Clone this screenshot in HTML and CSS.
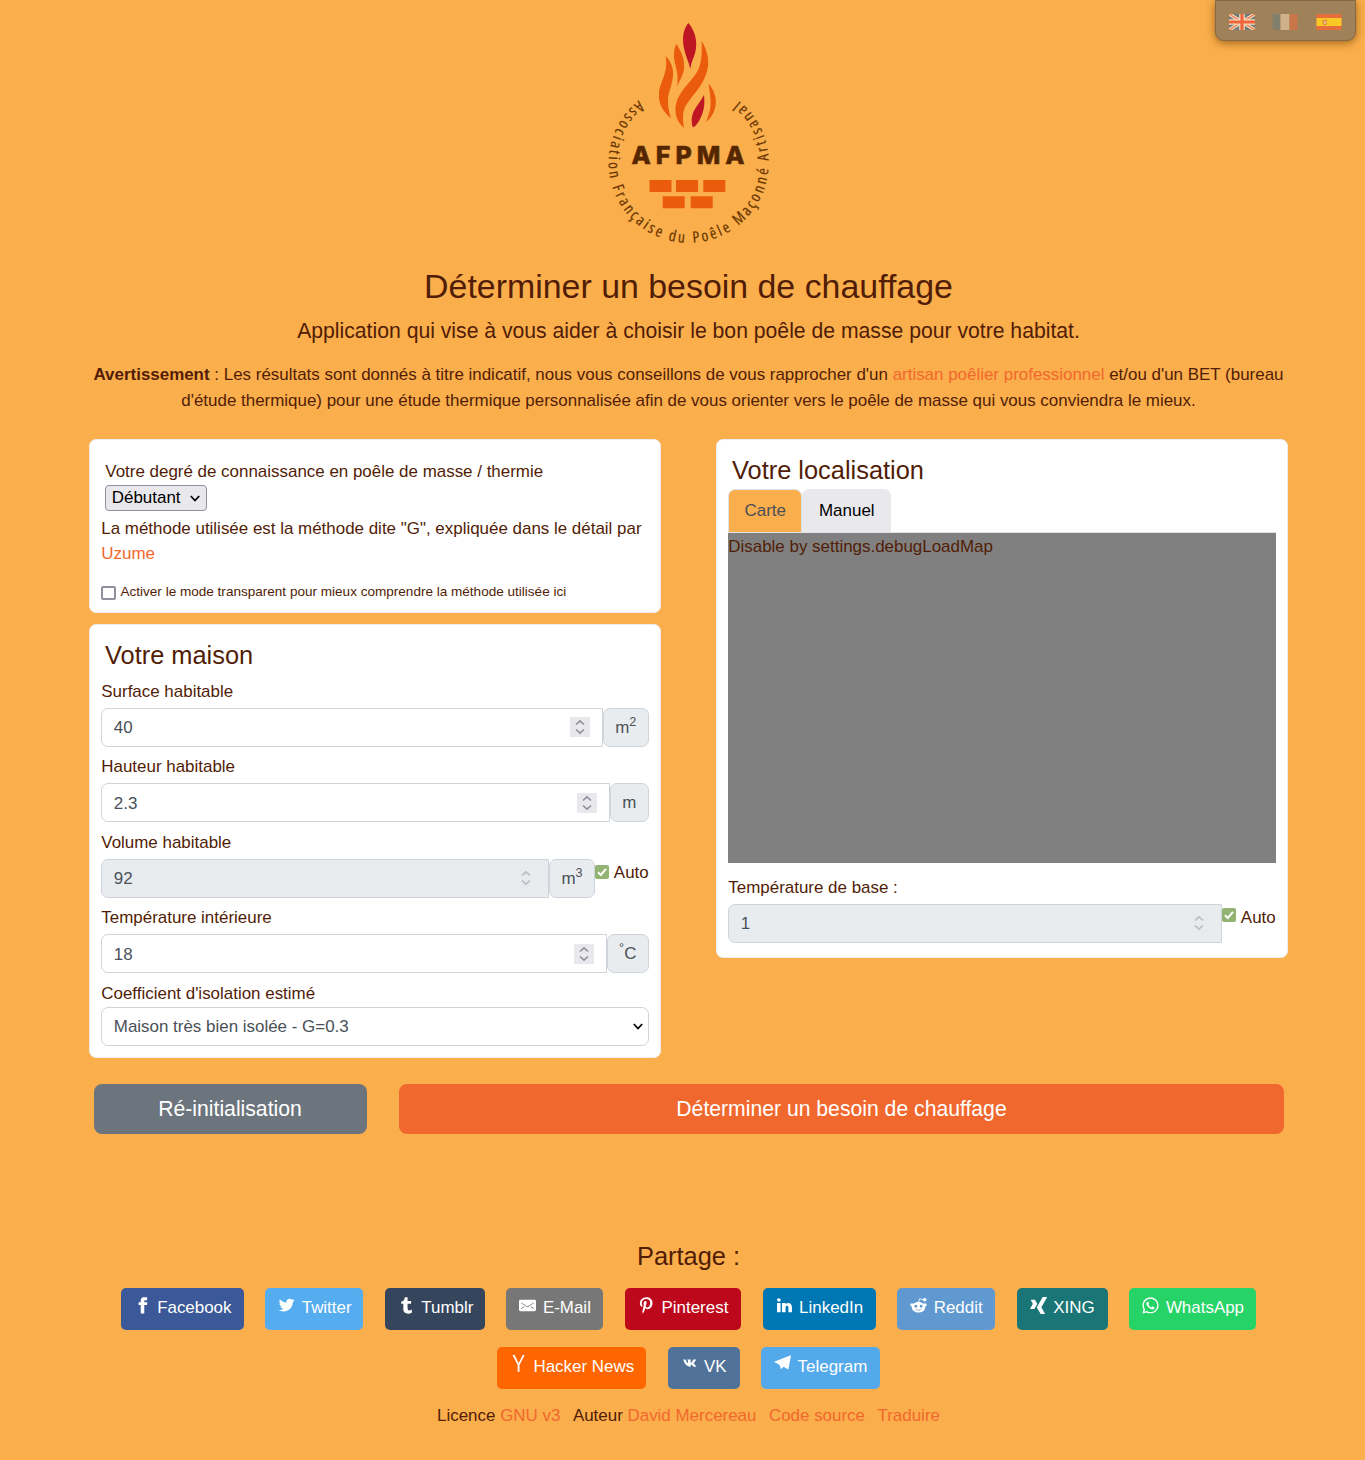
FILE: index.html
```html
<!DOCTYPE html>
<html lang="fr">
<head>
<meta charset="utf-8">
<title>Déterminer un besoin de chauffage</title>
<link rel="stylesheet" href="styles.css">
</head>
<body>
<nav class="langs">
  <svg class="flag" viewBox="0 0 26 16"><path fill="#6d7a7c" d="M0 0h26v16H0z"/><path stroke="#f5dcbc" stroke-width="3.6" d="M0 0l26 16M26 0L0 16"/><path stroke="#ee7a50" stroke-width="1.3" d="M0 0l26 16M26 0L0 16"/><path stroke="#f5dcbc" stroke-width="5.6" d="M13 0v16M0 8h26"/><path stroke="#f0643c" stroke-width="3.2" d="M13 0v16M0 8h26"/></svg>
  <svg class="flag" viewBox="0 0 26 16"><path fill="#82806c" d="M.5 0h8v16h-8z"/><path fill="#d0b28a" d="M8.500 0h9v16h-9z"/><path fill="#c87548" d="M17.500 0h8v16h-8z"/></svg>
  <svg class="flag" viewBox="0 0 26 16"><path fill="#e66e3c" d="M.5 0h25v16H.5z"/><path fill="#fbc926" d="M.5 4h25v8H.5z"/><path fill="#e0953a" d="M6 6h2l1-1 2 1v5H7z"/><path fill="#efb985" d="M8 7h2v3H8z"/></svg>
</nav>
<main class="page">
  <header class="intro">
    <svg class="logo" viewBox="590 10 200 245">
      <defs><path id="ring" d="M638.500 100.500A80 80 0 1 0 738.800 100.500L733 96"/></defs>
      <path fill="#be1622" d="M688.500 23C695 31 697 40 696 48C695 57 691 61 690.500 69C688 60 683 50 683 40C683 33 685 27 688.500 23ZM704 95C705 104 704 110 701 117C699 122 696 126 693 127.500C691 122 691 116 695 109C698 104 702 99 704 95Z"/>
      <path fill="#ea5b0c" d="M676.500 44C681 51 685 59 684 69C683 76 679 81 677 87C679 76 676 68 674.500 61C673.500 54 674 48 676.500 44ZM665.500 56C671 61 673.500 68 673 76C672 86 668 93 668 100C668 107 669 113 671 118C664 113 658 104 659 93C660 81 669 72 665.500 56ZM701.500 41C708 51 710 63 706.500 73C702 88 691 96 685 107C682 114 683 121 684 128C677 122 674 113 676 104C679 90 694 80 699 68C702 60 702 50 701.500 41ZM708.500 83.500C714 90 717 98 715.500 106C714 114 710 119 706 122C710 112 711 107 710.500 99C710 92 709 88 708.500 83.500Z"/>
      <text class="logo-name" x="631.500" y="164" textLength="113">AFPMA</text>
      <path fill="#ea5b0c" d="M649.500 180h22v12h-22zM676 180h22v12h-22zM703.300 180h22v12h-22zM662.700 196.200h22v12h-22zM690.700 196.200h22v12h-22z"/>
      <text class="logo-ring"><textPath href="#ring" textLength="393">Association Française du Poêle Maçonné Artisanal</textPath></text>
    </svg>
    <h1>Déterminer un besoin de chauffage</h1>
    <p class="lead">Application qui vise à vous aider à choisir le bon poêle de masse pour votre habitat.</p>
    <p class="warning"><b>Avertissement</b> : Les résultats sont donnés à titre indicatif, nous vous conseillons de vous rapprocher d'un <a>artisan poêlier professionnel</a> et/ou d'un BET (bureau<br>d'étude thermique) pour une étude thermique personnalisée afin de vous orienter vers le poêle de masse qui vous conviendra le mieux.</p>
  </header>
  <form>
    <div class="columns">
      <div class="column">
        <section class="card level">
          <p class="level-label">Votre degré de connaissance en poêle de masse / thermie</p>
          <button type="button" class="level-select">Débutant<svg viewBox="0 0 10 7"><path d="M.8 1L5 5.500L9.200 1"/></svg></button>
          <p>La méthode utilisée est la méthode dite "G", expliquée dans le détail par<br><a>Uzume</a></p>
          <label class="transparent"><span class="box"></span>Activer le mode transparent pour mieux comprendre la méthode utilisée ici</label>
        </section>
        <section class="card house">
          <h2>Votre maison</h2>
          <div class="field"><label>Surface habitable</label><div class="group"><div class="control">40<svg class="spin" viewBox="0 0 20 20"><path d="M6 7.500L10 3.800L14 7.500M6 12.500L10 16.200L14 12.500"/></svg></div><span class="unit">m<sup>2</sup></span></div></div>
          <div class="field"><label>Hauteur habitable</label><div class="group"><div class="control">2.3<svg class="spin" viewBox="0 0 20 20"><path d="M6 7.500L10 3.800L14 7.500M6 12.500L10 16.200L14 12.500"/></svg></div><span class="unit">m</span></div></div>
          <div class="field"><label>Volume habitable</label><div class="group"><div class="control off">92<svg class="spin" viewBox="0 0 20 20"><path d="M6 7.500L10 3.800L14 7.500M6 12.500L10 16.200L14 12.500"/></svg></div><span class="unit">m<sup>3</sup></span><span class="auto"><svg class="check" viewBox="0 0 14 14"><path d="M3 7.300L5.800 10L11 3.800"/></svg>Auto</span></div></div>
          <div class="field"><label>Température intérieure</label><div class="group"><div class="control">18<svg class="spin" viewBox="0 0 20 20"><path d="M6 7.500L10 3.800L14 7.500M6 12.500L10 16.200L14 12.500"/></svg></div><span class="unit"><sup>°</sup>C</span></div></div>
          <div class="field last"><label>Coefficient d'isolation estimé</label><div class="control select">Maison très bien isolée - G=0.3<svg viewBox="0 0 10 7"><path d="M.8 1L5 5.500L9.200 1"/></svg></div></div>
        </section>
      </div>
      <div class="column">
        <section class="card place">
          <h2>Votre localisation</h2>
          <div class="tabs"><button type="button" class="tab active">Carte</button><button type="button" class="tab">Manuel</button></div>
          <div class="map">Disable by settings.debugLoadMap</div>
          <div class="field base"><label>Température de base :</label><div class="group"><div class="control off">1<svg class="spin" viewBox="0 0 20 20"><path d="M6 7.500L10 3.800L14 7.500M6 12.500L10 16.200L14 12.500"/></svg></div><span class="auto"><svg class="check" viewBox="0 0 14 14"><path d="M3 7.300L5.800 10L11 3.800"/></svg>Auto</span></div></div>
        </section>
      </div>
    </div>
    <div class="actions"><button type="button" class="reset">Ré-initialisation</button><button type="button" class="submit">Déterminer un besoin de chauffage</button></div>
  </form>
  <footer>
    <h2 class="share-title">Partage :</h2>
    <div class="shares">
      <a class="share facebook"><svg viewBox="0 0 24 24"><path d="M18.770 7.460H14.500v-1.900c0-.9.6-1.100 1-1.100h3V.5h-4.330C10.240.5 9.500 3.440 9.500 5.320v2.150h-3v4h3v12h5v-12h3.850l.42-4z"/></svg><span>Facebook</span></a>
      <a class="share twitter"><svg viewBox="0 0 24 24"><path d="M23.440 4.830c-.8.37-1.500.38-2.220.02.93-.56.98-.96 1.320-2.020-.88.52-1.860.9-2.900 1.100-.82-.88-2-1.430-3.300-1.430-2.500 0-4.550 2.040-4.550 4.540 0 .36.03.7.1 1.040-3.770-.2-7.120-2-9.360-4.750-.4.67-.6 1.450-.6 2.300 0 1.560.8 2.950 2 3.770-.74-.03-1.440-.23-2.050-.57v.06c0 2.200 1.560 4.030 3.640 4.440-.67.2-1.370.2-2.060.08.58 1.800 2.260 3.120 4.250 3.160C5.780 18.100 3.370 18.740 1 18.460c2 1.300 4.400 2.040 6.970 2.040 8.350 0 12.920-6.920 12.920-12.930 0-.2 0-.4-.02-.6.9-.63 1.960-1.220 2.560-2.140z"/></svg><span>Twitter</span></a>
      <a class="share tumblr"><svg viewBox="0 0 24 24"><path d="M13.500.5v5h5v4h-5V15c0 5 3.500 4.400 6 2.800v4.400c-6.700 3.200-12 0-12-4.200V9.500h-3V6.700c1-.3 2.200-.7 3-1.300.5-.5 1-1.200 1.400-2 .3-.7.6-1.700.7-3h3.800z"/></svg><span>Tumblr</span></a>
      <a class="share email"><svg viewBox="0 0 24 24"><path d="M22 4H2C.9 4 0 4.900 0 6v12c0 1.100.9 2 2 2h20c1.100 0 2-.9 2-2V6c0-1.100-.9-2-2-2zM7.250 14.430l-3.500 2c-.08.05-.17.07-.25.07-.17 0-.34-.1-.43-.25-.14-.24-.06-.55.18-.68l3.500-2c.24-.14.55-.06.68.18.14.24.06.55-.18.68zm4.750.07c-.1 0-.2-.03-.27-.08l-8.500-5.500c-.23-.15-.3-.46-.15-.7.15-.22.46-.3.7-.14L12 13.400l8.230-5.320c.23-.15.54-.08.7.15.14.23.07.54-.16.7l-8.500 5.500c-.08.04-.17.07-.27.07zm8.930 1.750c-.1.16-.26.25-.43.25-.08 0-.17-.02-.25-.07l-3.500-2c-.24-.13-.32-.44-.18-.68s.44-.32.68-.18l3.500 2c.24.13.32.44.18.68z"/></svg><span>E-Mail</span></a>
      <a class="share pinterest"><svg viewBox="0 0 24 24"><path d="M12.140.5C5.860.5 2.700 5 2.700 8.750c0 2.270.86 4.300 2.700 5.050.3.12.57 0 .66-.33l.27-1.060c.1-.32.06-.44-.2-.73-.52-.62-.86-1.440-.86-2.600 0-3.330 2.500-6.320 6.500-6.320 3.550 0 5.500 2.170 5.500 5.070 0 3.800-1.700 7.020-4.200 7.020-1.370 0-2.400-1.140-2.070-2.540.4-1.680 1.160-3.480 1.160-4.700 0-1.070-.58-1.980-1.780-1.980-1.400 0-2.550 1.470-2.550 3.420 0 1.250.43 2.100.43 2.100l-1.700 7.200c-.5 2.130-.08 4.750-.04 5 .02.17.22.2.3.1.14-.18 1.820-2.260 2.400-4.330.16-.58.93-3.630.93-3.630.45.88 1.800 1.650 3.220 1.650 4.250 0 7.130-3.870 7.130-9.050C20.500 4.150 17.180.5 12.140.5z"/></svg><span>Pinterest</span></a>
      <a class="share linkedin"><svg viewBox="0 0 24 24"><path d="M6.500 21.500h-5v-13h5v13zM4 6.500C2.500 6.500 1.500 5.300 1.500 4s1-2.400 2.500-2.400c1.600 0 2.500 1 2.600 2.500 0 1.400-1 2.500-2.600 2.500zm11.500 6c-1 0-2 1-2 2v7h-5v-13h5V10s1.600-1.500 4-1.500c3 0 5 2.200 5 6.300v6.700h-5v-7c0-1-1-2-2-2z"/></svg><span>LinkedIn</span></a>
      <a class="share reddit"><svg viewBox="0 0 24 24"><path fill-rule="evenodd" d="M12 7c5.500 0 9.500 3.300 9.500 7.600S17.500 22 12 22s-9.500-3.200-9.500-7.400S6.500 7 12 7zM8.300 11a2 2 0 1 0 0 4 2 2 0 0 0 0-4zm7.400 0a2 2 0 1 0 0 4 2 2 0 0 0 0-4zM7.500 17c2.500 2.800 6.500 2.800 9 0-2.500 1.500-6.500 1.500-9 0z"/><circle cx="20.800" cy="4" r="2.500"/><circle cx="2.700" cy="11" r="2.300"/><circle cx="21.300" cy="11" r="2.300"/><path d="M12 7.500L13.500 2.500L19 4" fill="none" stroke="#fff" stroke-width="1.200"/></svg><span>Reddit</span></a>
      <a class="share xing"><svg viewBox="0 0 24 24"><path d="M10.200 9.700l-3-5.400C7.200 4 7 4 6.800 4h-5c-.3 0-.4 0-.5.2v.5L4 10 .4 16v.5c0 .2.2.3.4.3h5c.3 0 .4 0 .5-.2l4-6.600v-.5zM24 .2l-.5-.2H18s-.2 0-.3.3l-8 14v.4l5.200 9c0 .2 0 .3.3.3h5.400s.3 0 .4-.2c.2-.2.2-.4 0-.5l-5-8.800L24 .7V.2z"/></svg><span>XING</span></a>
      <a class="share whatsapp"><svg viewBox="0 0 24 24"><path d="M20.100 3.900C17.900 1.700 15 .5 12 .5 5.800.5.7 5.600.7 11.900c0 2 .5 3.900 1.500 5.600L.6 23.400l6-1.600c1.600.9 3.500 1.300 5.400 1.300 6.300 0 11.400-5.100 11.400-11.400-.1-2.800-1.200-5.700-3.300-7.800zM12 21.400c-1.700 0-3.300-.5-4.800-1.300l-.4-.2-3.500 1 1-3.400L4 17c-1-1.500-1.400-3.200-1.400-5.100 0-5.200 4.200-9.400 9.400-9.400 2.500 0 4.900 1 6.700 2.800 1.800 1.800 2.800 4.200 2.800 6.700-.1 5.200-4.300 9.400-9.500 9.400zm5.100-7.100c-.3-.1-1.700-.9-1.900-1-.3-.1-.5-.1-.7.1-.2.3-.8 1-.9 1.100-.2.2-.3.2-.6.1s-1.200-.5-2.300-1.400c-.9-.8-1.400-1.700-1.600-2-.2-.3 0-.5.1-.6s.3-.3.4-.5c.2-.1.3-.3.4-.5.1-.2 0-.4 0-.5C10 9 9.300 7.600 9 7c-.1-.4-.4-.3-.5-.3h-.6s-.4.1-.7.3c-.3.3-1 1-1 2.400s1 2.800 1.100 3c.1.2 2 3.100 4.900 4.300.7.3 1.200.5 1.600.6.7.2 1.300.2 1.800.1.600-.1 1.700-.7 1.900-1.300.2-.7.2-1.200.2-1.300-.1-.3-.3-.4-.6-.5z"/></svg><span>WhatsApp</span></a>
      <a class="share hacker"><svg viewBox="0 0 24 24"><path d="M3.500 0h3l5.700 11.500L18 0h2.700L13.400 14v9.500h-2.600V14z"/></svg><span>Hacker News</span></a>
      <a class="share vk"><svg viewBox="0 0 24 24"><path d="M2 7h3.500c1 2.800 2.300 4.700 3.300 5.100V8.200L7.700 6.700h5v5.100c1.600-.7 2.700-2.600 3.700-4.800h3.700c-.6 2.300-2.300 4.200-3.500 5.200 1.500 1 3 2.600 4.100 4.800h-4c-1-1.500-2.300-2.700-4-3v3C7.500 17.300 4.200 13.500 2 7z" transform="translate(1 -.5)"/></svg><span>VK</span></a>
      <a class="share telegram"><svg viewBox="0 0 24 24"><path d="M0 9.500L24 .5L20.300 20.500L13.500 16.500L9.800 20L8 14z"/></svg><span>Telegram</span></a>
    </div>
    <p class="credits"><span>Licence <a>GNU v3</a></span><span>Auteur <a>David Mercereau</a></span><a>Code source</a><a>Traduire</a></p>
  </footer>
</main>
</body>
</html>
```
FILE: styles.css
```css
* { box-sizing: border-box; }
body { margin: 0; min-height: 1460px; background: #fbae4c; color: #511d06; font: 16.940px/25.500px "Liberation Sans", Arial, sans-serif; }
h1, h2, p { margin: 0; font-weight: 400; }
button { font: inherit; border: 0; padding: 0; }
a { color: #f1682e; text-decoration: none; }
sup { font-size: .75em; line-height: 0; position: relative; top: -.5em; vertical-align: baseline; }

.langs { position: absolute; top: 0; right: 9.500px; width: 141px; height: 40.500px; display: flex; gap: 17.500px; padding: 13px 0 0 13px; background: #9f815a; border: 1px solid #846744; border-radius: 0 0 9px 9px; box-shadow: 0 2px 9px #704500b0; }
.flag { width: 26px; height: 16px; }

.page { width: 1199px; margin-left: 89px; }
.intro { text-align: center; padding-top: 10px; }
.logo { display: block; width: 200px; height: 245px; margin: 0 auto 0 501px; }
.logo-name { font: 800 25px Inter, sans-serif; fill: #552700; stroke: #552700; stroke-width: .5; }
.logo-ring { font: 500 15.500px "Open Sans", sans-serif; font-stretch: 80%; fill: #693600; stroke: #693600; stroke-width: .2; }
h1 { font-size: 33.900px; line-height: 41px; padding-top: 11px; height: 58px; }
.lead { font-size: 21.180px; line-height: 32px; padding-top: 2px; height: 49px; }
.warning { height: 77px; }

.columns { display: flex; gap: 55px; }
.column { width: 572px; display: flex; flex-direction: column; align-items: stretch; gap: 11px; }
.card { background: #fff; border: 1px solid #ececec; border-radius: 7px; padding: 0 11.300px; }
.card h2 { font-size: 25.400px; line-height: 30px; padding-left: 3.700px; }
.level { height: 174px; padding-top: 19px; }
.level-label { padding-left: 4px; }
.level-select { display: flex; align-items: center; gap: 9px; width: 102px; height: 26px; margin: 0 0 5px 4px; padding: 1px 6px 0 5.500px; background: #e9e9ed; color: #000; border: 1px solid #8f8f9d; border-radius: 4px; line-height: 24px; }
.level-select svg, .select svg { width: 10px; height: 7px; flex: none; fill: none; stroke: #000; stroke-width: 1.700; }
.transparent { display: flex; align-items: center; gap: 4.700px; margin-top: 12px; font-size: 13.550px; }
.box { width: 14.500px; height: 14px; margin-top: 4px; border: 2px solid #8f8f9d; border-radius: 2px; background: #fff; }

.house { height: 433.500px; padding-top: 15px; }
.house h2 { margin-bottom: 8.500px; }
.field { height: 75.500px; }
.field label { display: block; height: 29.300px; }
.group { display: flex; }
.control { flex: 1; display: flex; align-items: center; justify-content: space-between; height: 39px; padding: 1.500px 12px 0 11.500px; color: #495057; background: #fff; border: 1px solid #ced4da; border-radius: 7px 0 0 7px; }
.spin { width: 20px; height: 20px; margin-top: -1.500px; background: #e9e9ed; fill: none; stroke: #8f8f9d; stroke-width: 1.700; }
.off { background: #e9ecef; }
.off .spin { opacity: .5; }
.unit { height: 39px; padding: 0 11.300px; line-height: 38.500px; color: #495057; background: #e9ecef; border: 1px solid #ced4da; border-radius: 7px; }
.unit sup { top: -.55em; }
.auto { display: flex; gap: 5px; padding-top: 1px; }
.check { width: 14px; height: 14px; margin-top: 5px; border-radius: 2px; background: #93b373; fill: none; stroke: #fff; stroke-width: 2; }
.last label { height: 26.500px; }
.select { border-radius: 7px; padding-top: 0; padding-right: 5px; }

.place { height: 519px; padding-top: 14.500px; }
.tabs { display: flex; height: 48px; padding-top: 4px; border-bottom: 1px solid #dee2e6; }
.tab { width: 89px; padding-top: 1px; border-radius: 7px 7px 0 0; background: #e9e9ed; color: #000; }
.tab.active { width: 74px; background: #fbae4c; color: #495057; border: 1px solid #dee2e6; border-bottom: 0; }
.map { height: 330px; background: #808080; padding-top: 1px; }
.base { margin-top: 12px; }
.base .check { margin-top: 3px; }

.actions { display: flex; gap: 32.500px; padding: 26.500px 4px 0 4.500px; }
.actions button { height: 49.500px; border-radius: 8px; font-size: 21.180px; color: #fff; }
.actions .reset { width: 273px; background: #6c757d; }
.actions .submit { flex: 1; background: #f1682e; }

footer { padding-top: 107px; text-align: center; }
.share-title { font-size: 25.400px; line-height: 31px; margin-bottom: 16px; }
.shares { display: flex; flex-wrap: wrap; justify-content: center; gap: 17px 21.600px; }
.share { display: flex; height: 42.400px; gap: 6.500px; padding: 9.500px 0 0 13px; border-radius: 5px; color: #fff; line-height: 21px; white-space: nowrap; }
.share svg { width: 17px; height: 17px; margin-top: -.5px; flex: none; fill: #fff; }
.facebook { width: 123px; background: #3b5998; }
.twitter { width: 98px; background: #55acee; }
.tumblr { width: 100px; background: #35465c; }
.email { width: 97px; background: #777; }
.pinterest { width: 116px; background: #bd081c; }
.linkedin { width: 113px; background: #0077b5; }
.reddit { width: 98px; background: #5f99cf; }
.xing { width: 91px; background: #1a7576; }
.whatsapp { width: 127px; background: #25d366; }
.hacker { width: 149px; background: #f60; }
.vk { width: 72px; background: #507299; }
.telegram { width: 119px; background: #54a9eb; }
.hacker svg, .vk svg, .telegram svg { margin-top: -1.500px; }
.credits { display: flex; justify-content: center; gap: 12.500px; padding-top: 13.500px; }
```
